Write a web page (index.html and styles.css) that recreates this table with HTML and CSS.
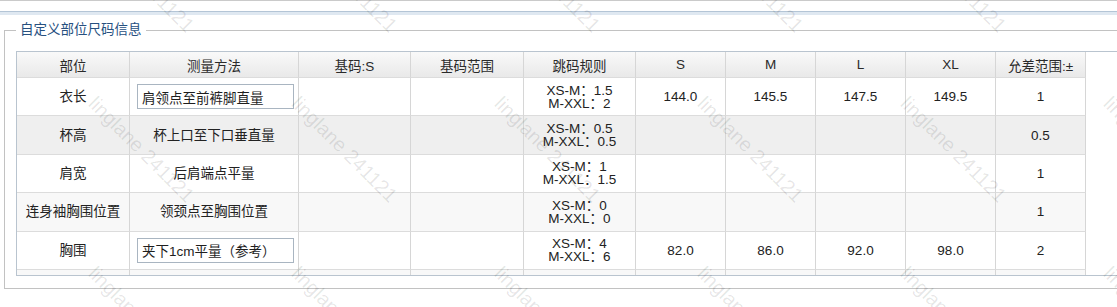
FILE: index.html
```html
<!DOCTYPE html>
<html lang="zh-CN">
<head>
<meta charset="utf-8">
<title>自定义部位尺码信息</title>
<link rel="stylesheet" href="styles.css">
</head>
<body>
<div class="topbar"></div>
<div class="topband"></div>
<fieldset class="panel">
  <legend class="panel-title">自定义部位尺码信息</legend>
  <div class="grid-wrap">
    <table class="size-table">
      <colgroup>
        <col class="c-part"><col class="c-method"><col class="c-base"><col class="c-range"><col class="c-rule">
        <col class="c-size"><col class="c-size"><col class="c-size"><col class="c-size"><col class="c-size">
      </colgroup>
      <thead>
        <tr><th>部位</th><th>测量方法</th><th>基码:S</th><th>基码范围</th><th>跳码规则</th><th>S</th><th>M</th><th>L</th><th>XL</th><th>允差范围:±</th></tr>
      </thead>
      <tbody>
        <tr>
          <td>衣长</td>
          <td class="edit"><input class="method-input" type="text" value="肩领点至前裤脚直量"></td>
          <td></td><td></td>
          <td class="rule">XS-M：1.5<br>M-XXL：2</td>
          <td>144.0</td><td>145.5</td><td>147.5</td><td>149.5</td><td>1</td>
        </tr>
        <tr class="row-gray">
          <td>杯高</td>
          <td>杯上口至下口垂直量</td>
          <td></td><td></td>
          <td class="rule">XS-M：0.5<br>M-XXL：0.5</td>
          <td></td><td></td><td></td><td></td><td>0.5</td>
        </tr>
        <tr>
          <td>肩宽</td>
          <td>后肩端点平量</td>
          <td></td><td></td>
          <td class="rule">XS-M：1<br>M-XXL：1.5</td>
          <td></td><td></td><td></td><td></td><td>1</td>
        </tr>
        <tr class="row-light">
          <td>连身袖胸围位置</td>
          <td>领颈点至胸围位置</td>
          <td></td><td></td>
          <td class="rule">XS-M：0<br>M-XXL：0</td>
          <td></td><td></td><td></td><td></td><td>1</td>
        </tr>
        <tr>
          <td>胸围</td>
          <td class="edit"><input class="method-input" type="text" value="夹下1cm平量（参考）"></td>
          <td></td><td></td>
          <td class="rule">XS-M：4<br>M-XXL：6</td>
          <td>82.0</td><td>86.0</td><td>92.0</td><td>98.0</td><td>2</td>
        </tr>
        <tr class="row-light">
          <td></td>
          <td></td>
          <td></td><td></td>
          <td class="rule">XS-M：3<br>M-XXL：4</td>
          <td></td><td></td><td></td><td></td><td></td>
        </tr>
      </tbody>
    </table>
  </div>
</fieldset>
<div class="watermarks" aria-hidden="true">
  <span>linglane 241121</span><span>linglane 241121</span><span>linglane 241121</span><span>linglane 241121</span><span>linglane 241121</span><span>linglane 241121</span><span>linglane 241121</span>
  <span>linglane 241121</span><span>linglane 241121</span><span>linglane 241121</span><span>linglane 241121</span><span>linglane 241121</span><span>linglane 241121</span><span>linglane 241121</span>
  <span>linglane 241121</span><span>linglane 241121</span><span>linglane 241121</span><span>linglane 241121</span><span>linglane 241121</span><span>linglane 241121</span><span>linglane 241121</span>
</div>
</body>
</html>
```
FILE: styles.css
```css
html, body {
  margin: 0;
  padding: 0;
  background: #fff;
}
body {
  position: relative;
  width: 1117px;
  height: 307px;
  overflow: hidden;
  font-family: "Liberation Sans", "Noto Sans CJK SC", sans-serif;
  font-size: 13.5px;
  color: #222;
}
.topbar {
  height: 10px;
  border-top: 1px solid #cacaca;
  border-bottom: 1px solid #b4c5d6;
}
.topband {
  height: 3px;
  background: #dfe8f1;
}
.panel {
  margin: 6px 0 0 4px;
  padding: 12px 11px 12px 11px;
  border: 1px solid #c2c2c2;
  width: 1200px;
  min-width: 0;
}
.panel-title {
  padding: 0 4px;
  line-height: 18px;
  color: #27507f;
}
.grid-wrap {
  height: 223px;
  overflow: hidden;
  border: 1px solid #b9c4cf;
  background: #fff;
}
.size-table {
  table-layout: fixed;
  width: 1069px;
  border-collapse: separate;
  border-spacing: 0;
}
.c-part { width: 113px; }
.c-method { width: 169px; }
.c-base { width: 112px; }
.c-range { width: 113px; }
.c-rule { width: 112px; }
.c-size { width: 90px; }
.size-table th,
.size-table td {
  box-sizing: border-box;
  padding: 0;
  text-align: center;
  vertical-align: middle;
  border-right: 1px solid #d6d6d6;
  border-bottom: 1px solid #dcdcdc;
  white-space: nowrap;
  overflow: hidden;
}
.size-table th {
  height: 26px;
  font-weight: normal;
  color: #2a2a2a;
  background: linear-gradient(#f9f9f9, #e9e9e9);
}
.size-table td {
  height: 38.4px;
  line-height: 13px;
}
.size-table td.edit {
  text-align: left;
}
.row-gray td { background: #efefef; }
.row-light td { background: #f8f8f8; }
.method-input {
  display: block;
  box-sizing: border-box;
  width: 157px;
  height: 25px;
  margin-left: 7px;
  padding: 0 4px;
  border: 1px solid #a9b5c1;
  font: inherit;
  color: #1e1e1e;
  background: #fff;
}
.watermarks {
  position: absolute;
  left: -103px;
  top: -78px;
  display: grid;
  grid-template-columns: repeat(7, 203px);
  grid-auto-rows: 170px;
  pointer-events: none;
}
.watermarks span {
  display: block;
  width: max-content;
  transform: rotate(45deg);
  transform-origin: 0 0;
  font-family: "Liberation Sans", sans-serif;
  font-size: 20px;
  color: rgba(0, 0, 0, 0.1);
  white-space: nowrap;
}
```
